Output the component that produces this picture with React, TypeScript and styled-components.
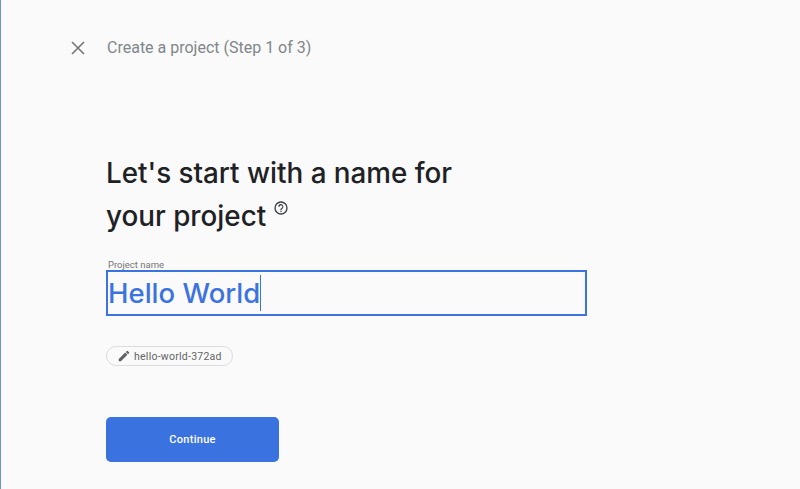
import { createGlobalStyle } from "styled-components";
import styled from "styled-components";

const GlobalStyle = createGlobalStyle`
  html, body {
    margin: 0;
    padding: 0;
    height: 100%;
    background: #fafafa;
    overflow: hidden;
  }
`;

const Page = styled.div`
  box-sizing: border-box;
  width: 800px;
  height: 489px;
  border-left: 1px solid #6f90c8;
  background: #fafafa;
  font-family: Roboto, "Liberation Sans", sans-serif;
`;

const TopBar = styled.div`
  display: flex;
  align-items: center;
  height: 24px;
  padding: 36px 0 0 65px;
`;

const CloseButton = styled.button`
  display: flex;
  align-items: center;
  justify-content: center;
  width: 24px;
  height: 24px;
  padding: 0;
  border: none;
  background: none;
  color: #757575;
`;

const StepTitle = styled.div`
  margin-left: 17px;
  font-size: 16px;
  line-height: 24px;
  color: #80868b;
`;

const Content = styled.div`
  padding: 92px 0 0 105px;
`;

const Heading = styled.h1`
  width: 400px;
  height: 86px;
  margin: 0;
  font-family: Inter, Roboto, sans-serif;
  font-size: 27.8px;
  font-weight: 500;
  line-height: 43px;
  color: #202124;
`;

const HelpIcon = styled.svg`
  width: 16px;
  height: 16px;
  margin-left: 7px;
  vertical-align: 10px;
  color: #3c4043;
`;

const FieldLabel = styled.div`
  margin: 21px 0 0 2px;
  font-size: 9.5px;
  line-height: 11px;
  color: #757575;
`;

const NameField = styled.div`
  box-sizing: border-box;
  display: flex;
  align-items: center;
  width: 481px;
  height: 46px;
  border: 2px solid #3b73e0;
  font-family: Inter, Roboto, sans-serif;
  font-size: 27.5px;
  font-weight: 500;
  color: #3b73e0;
`;

const Caret = styled.span`
  width: 1px;
  height: 36px;
  background: #3b73e0;
`;

const IdChip = styled.div`
  box-sizing: border-box;
  display: inline-flex;
  align-items: center;
  gap: 3px;
  height: 20px;
  margin-top: 30px;
  padding: 0 10px;
  border: 1px solid #dadce0;
  border-radius: 10px;
  font-size: 10.5px;
  letter-spacing: 0.25px;
  color: #5f6368;
`;

const ContinueButton = styled.button`
  display: block;
  width: 173px;
  height: 45px;
  margin-top: 50px;
  border: none;
  border-radius: 5px;
  background: #3a72e0;
  color: #ffffff;
  font-family: Roboto, "Liberation Sans", sans-serif;
  font-size: 11px;
  font-weight: 500;
  letter-spacing: 0.3px;
`;

const App = () => {
  return (
    <>
      <GlobalStyle />
      <Page>
        <TopBar>
          <CloseButton aria-label="Close">
            <svg width="24" height="24" viewBox="0 0 24 24" fill="none" stroke="currentColor" strokeWidth="1.6">
              <path d="M6 6l12 12M18 6L6 18" />
            </svg>
          </CloseButton>
          <StepTitle>Create a project (Step 1 of 3)</StepTitle>
        </TopBar>
        <Content>
          <Heading>
            Let's start with a name for
            <br />
            your project
            <HelpIcon viewBox="0 0 24 24" fill="currentColor">
              <path d="M12 2a10 10 0 1 0 0 20 10 10 0 0 0 0-20zm0 18a8 8 0 1 1 0-16 8 8 0 0 1 0 16zm-1-4h2v2h-2v-2zm1.6-9.9A4 4 0 0 0 8 10h2a2 2 0 1 1 3.2 1.6c-1.3 1-2.2 1.6-2.2 3.4h2c0-1.2.5-1.7 1.5-2.4A4 4 0 0 0 12.6 6.1z" />
            </HelpIcon>
          </Heading>
          <FieldLabel>Project name</FieldLabel>
          <NameField>
            Hello World
            <Caret />
          </NameField>
          <IdChip>
            <svg width="14" height="14" viewBox="0 0 24 24" fill="#5f6368">
              <path d="M3 17.25V21h3.75L17.81 9.94l-3.75-3.75L3 17.25zM20.71 7.04a1 1 0 0 0 0-1.41l-2.34-2.34a1 1 0 0 0-1.41 0l-1.83 1.83 3.75 3.75 1.83-1.83z" />
            </svg>
            hello-world-372ad
          </IdChip>
          <ContinueButton>Continue</ContinueButton>
        </Content>
      </Page>
    </>
  );
};

export default App;
